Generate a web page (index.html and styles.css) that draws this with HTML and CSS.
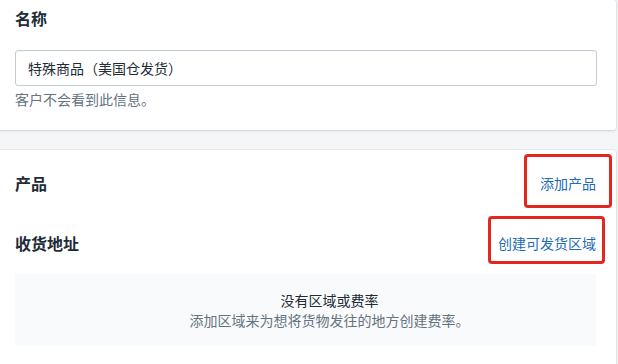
FILE: index.html
```html
<!DOCTYPE html>
<html lang="zh-CN">
<head>
    <meta charset="UTF-8">
    <meta name="viewport" content="width=device-width, initial-scale=1.0">
    <title>运费设置</title>
    <link rel="stylesheet" href="styles.css">
</head>
<body>
    <div class="layout">
        <div class="card card-name">
            <h2 class="card-title">名称</h2>
            <input class="text-field" type="text" value="特殊商品（美国仓发货）">
            <p class="help-text">客户不会看到此信息。</p>
        </div>

        <div class="card card-zone">
            <div class="section-row row-products">
                <h2 class="card-title">产品</h2>
                <a href="#" class="action-link mark mark-products">添加产品</a>
            </div>
            <div class="section-row row-address">
                <h2 class="card-title">收货地址</h2>
                <a href="#" class="action-link mark mark-zone">创建可发货区域</a>
            </div>
            <div class="empty-state">
                <p class="empty-title">没有区域或费率</p>
                <p class="empty-text">添加区域来为想将货物发往的地方创建费率。</p>
            </div>
        </div>
    </div>
</body>
</html>
```

FILE: styles.css
```css
body {
    margin: 0;
    background: #f4f6f8;
    font-family: "Noto Sans CJK SC", "Noto Sans", sans-serif;
    font-size: 14px;
    line-height: 20px;
    color: #212b36;
}
.layout {
    padding-right: 2px;
}
.card {
    margin-left: -5px;
    padding: 0 20px;
    background: #ffffff;
    border-radius: 0 3px 3px 0;
    box-shadow: 0 0 0 1px rgba(63, 63, 68, 0.05), 0 1px 3px rgba(63, 63, 68, 0.15);
}
.card-name {
    padding-top: 6px;
    padding-bottom: 21px;
}
.card-zone {
    margin-top: 20px;
    padding-top: 21px;
    padding-bottom: 20px;
}
.card-title {
    margin: 0;
    font-size: 16px;
    line-height: 24px;
    font-weight: 700;
    color: #212b36;
}
.text-field {
    display: block;
    box-sizing: border-box;
    width: calc(100% + 1px);
    height: 36px;
    margin: 20px 0 0;
    padding: 0 12px;
    border: 1px solid #c4cdd5;
    border-radius: 3px;
    box-shadow: inset 0 1px 0 0 rgba(99, 115, 129, 0.05);
    font-family: inherit;
    font-size: 14px;
    color: #212b36;
    background: #ffffff;
}
.help-text {
    margin: 3px 0 0;
    color: #637381;
}
.section-row {
    display: flex;
    justify-content: space-between;
    align-items: center;
}
.row-address {
    margin-top: 36px;
}
.action-link {
    color: #206bb5;
    text-decoration: none;
    line-height: 24px;
}
.mark {
    position: relative;
}
.mark::after {
    content: "";
    position: absolute;
    border: 3px solid #e3261e;
    border-radius: 4px;
}
.mark-products::after {
    top: -17px;
    bottom: -13px;
    left: -16px;
    right: -16px;
}
.mark-zone::after {
    top: -15px;
    bottom: -9px;
    left: -10px;
    right: -9px;
}
.empty-state {
    margin-top: 19px;
    padding: 16px 16px 16px 64px;
    background: #f9fafb;
    text-align: center;
}
.empty-title,
.empty-text {
    margin: 0;
}
.empty-text {
    color: #637381;
}
```
